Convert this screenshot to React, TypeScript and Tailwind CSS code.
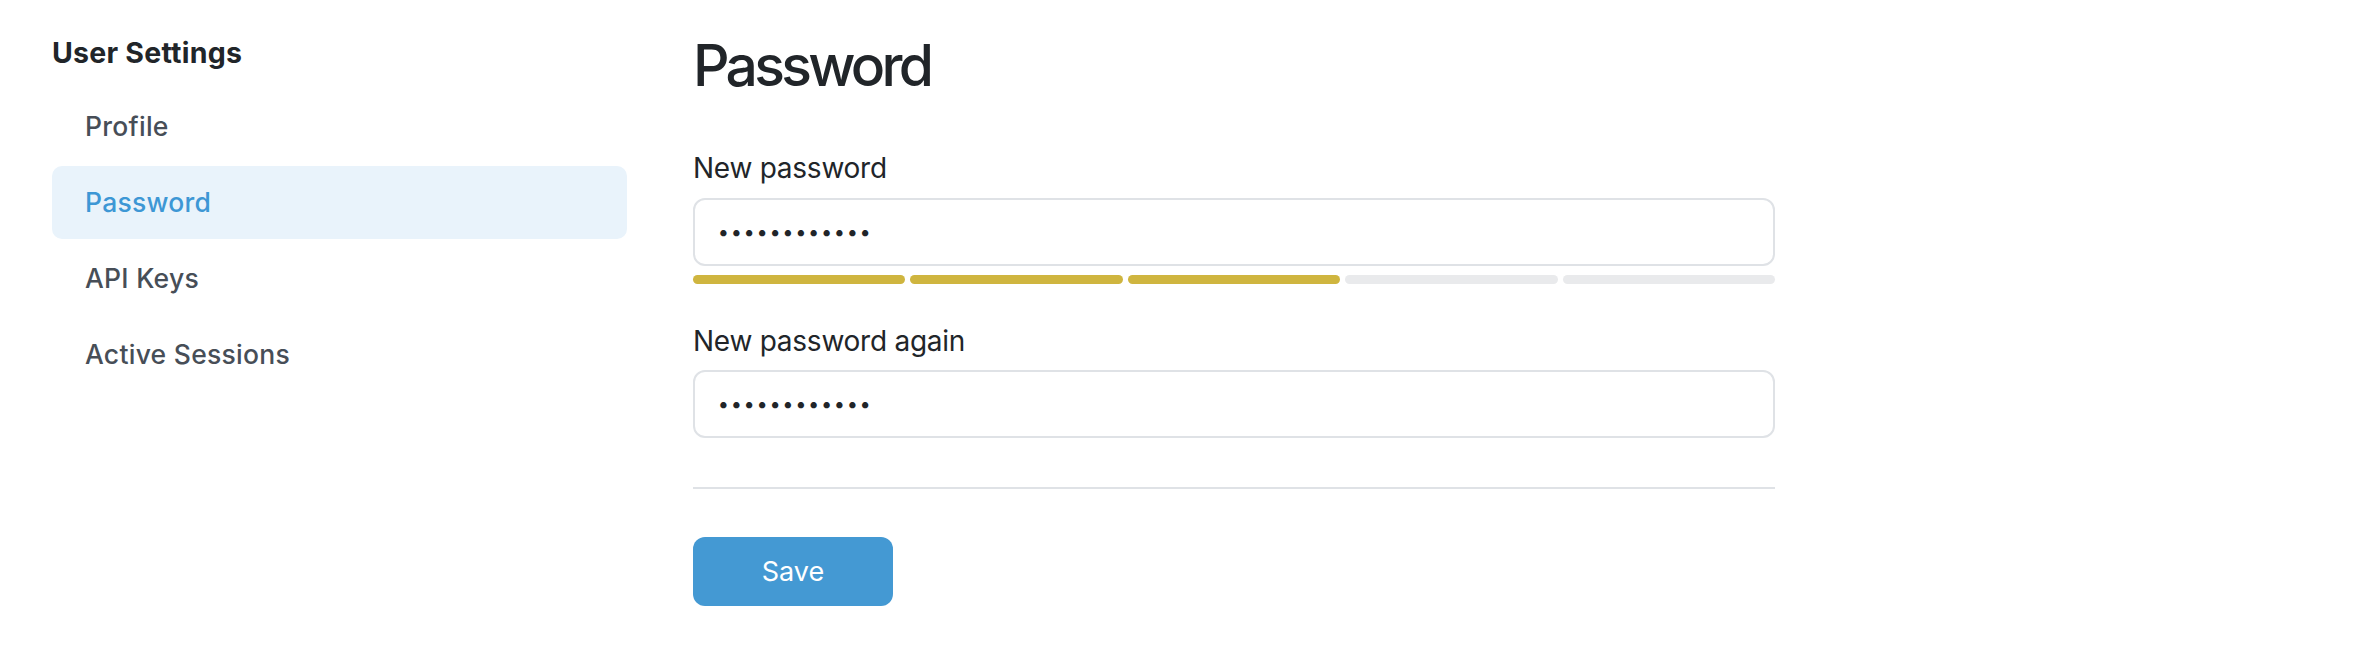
import React from "react";

const navItems = ["Profile", "Password", "API Keys", "Active Sessions"];

function Dots() {
  const dots = Array.from({ length: 12 });
  return (
    <div className="flex items-center h-full pl-[22px]">
      {dots.map((_, i) => (
        <span
          key={i}
          className="w-[12.9px] flex justify-center text-[20px] leading-none text-[#212529]"
        >
          •
        </span>
      ))}
    </div>
  );
}

function PasswordInput() {
  return (
    <div className="h-[68px] w-full border-2 border-[#dfe2e6] rounded-[12px] bg-white">
      <Dots />
    </div>
  );
}

export default function App() {
  const bars = [true, true, true, false, false];
  return (
    <div className="w-full h-[660px] bg-white font-['Inter',sans-serif] flex pl-[52px] gap-[66px]">
      <aside className="w-[575px] shrink-0 pt-[36px]">
        <div className="text-[28.5px] leading-[34px] font-bold text-[#212529] tracking-[0.008em]">
          User Settings
        </div>
        <nav className="mt-[20px] flex flex-col gap-[3px]">
          {navItems.map((item) => {
            const active = item === "Password";
            return (
              <div
                key={item}
                className={
                  active
                    ? "h-[73px] leading-[73px] pl-[33px] rounded-[10px] bg-[#e9f3fb] text-[#3d97d5] text-[26.5px] font-medium tracking-[0.01em]"
                    : "h-[73px] leading-[73px] pl-[33px] rounded-[10px] text-[#474e57] text-[26.5px] font-medium tracking-[0.01em]"
                }
              >
                {item}
              </div>
            );
          })}
        </nav>
      </aside>
      <main className="w-[1082px] shrink-0 pt-[32px]">
        <h1 className="text-[57px] leading-[68px] font-medium text-[#212529] tracking-[-0.065em]">
          Password
        </h1>
        <div className="mt-[51px] text-[28px] leading-[34px] text-[#212529] tracking-[-0.009em]">
          New password
        </div>
        <div className="mt-[13px]">
          <PasswordInput />
        </div>
        <div className="mt-[9px] flex gap-[5px]">
          {bars.map((on, i) => (
            <div
              key={i}
              className={on ? "flex-1 h-[9px] rounded-full bg-[#cfb53f]" : "flex-1 h-[9px] rounded-full bg-[#e9eaec]"}
            />
          ))}
        </div>
        <div className="mt-[40px] text-[28px] leading-[34px] text-[#212529] tracking-[-0.009em]">
          New password again
        </div>
        <div className="mt-[12px]">
          <PasswordInput />
        </div>
        <div className="mt-[49px] h-[2px] bg-[#dfe2e6]" />
        <button className="mt-[48px] w-[200px] h-[69px] rounded-[12px] bg-[#4499d3] text-white text-[27px] leading-none">
          Save
        </button>
      </main>
    </div>
  );
}
